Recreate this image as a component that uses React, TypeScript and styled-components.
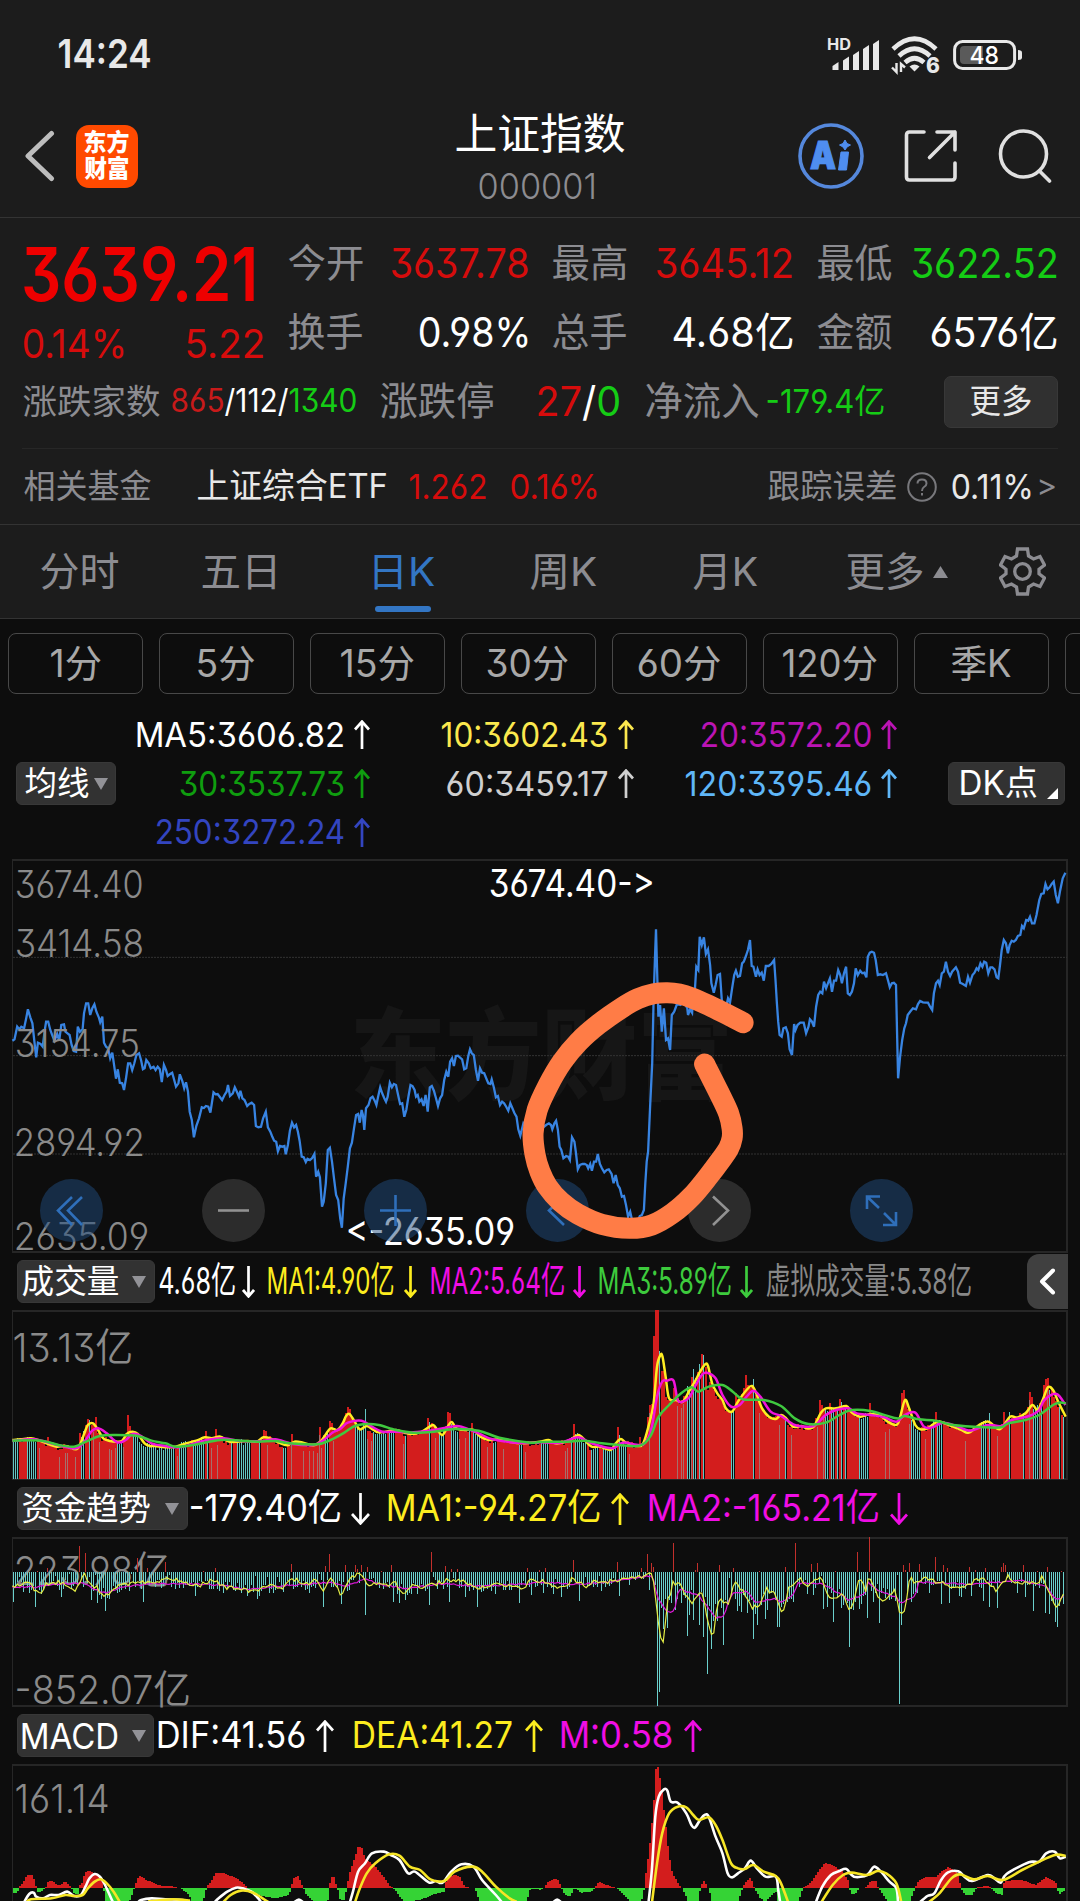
import React, { useLayoutEffect, useRef, useState } from "react";
import styled, { createGlobalStyle } from "styled-components";

const FONT = `Inter, Roboto, "Noto Sans CJK SC", sans-serif`;

const C = {
  bar: "#1c1c1c",
  page: "#0d0d0d",
  line: "#333333",
  frame: "#262626",
  gray: "#8c8c91",
  axis: "#8a8a8a",
  red: "#d60c0c",
  green: "#15cc15",
  white: "#ffffff",
  soft: "#e8e8e8",
  blue: "#3376c4",
  yellow: "#fcec1f",
  magenta: "#f00de4",
};

const Global = createGlobalStyle`
  html, body { margin: 0; padding: 0; background: ${C.page}; }
  *, *::before, *::after { box-sizing: border-box; }
  svg { display: block; flex: none; }
`;

/* ---------- text set to a given ink width ---------- */

const Slot = styled.span<{ $w: number; $ml: number; $size: number; $color: string; $weight: number }>`
  display: block;
  flex: none;
  width: ${(p) => p.$w}px;
  margin-left: ${(p) => p.$ml}px;
  height: 1.2em;
  line-height: 1.2em;
  font-family: ${FONT};
  font-size: ${(p) => p.$size}px;
  font-weight: ${(p) => p.$weight};
  color: ${(p) => p.$color};
  font-feature-settings: "cv03", "cv04", "cv09", "case", "calt" 0;
  white-space: pre;
`;

const Ink = styled.span`
  display: inline-block;
  transform-origin: 0 50%;
`;

type FitProps = {
  w: number;
  size: number;
  color?: string;
  weight?: number;
  ml?: number;
  className?: string;
  children: React.ReactNode;
};

function Fit({ w, size, color = C.gray, weight = 400, ml = 0, className, children }: FitProps) {
  const ref = useRef<HTMLSpanElement>(null);
  const [fit, setFit] = useState({ s: 1, x: 0 });
  useLayoutEffect(() => {
    const el = ref.current;
    const ctx = document.createElement("canvas").getContext("2d");
    if (!el || !ctx) return;
    ctx.font = `${weight} ${size}px ${FONT}`;
    const m = ctx.measureText(el.textContent || "");
    const lsb = -m.actualBoundingBoxLeft;
    const rsb = m.width - m.actualBoundingBoxRight;
    const s = w / (el.offsetWidth - lsb - rsb);
    setFit({ s, x: -lsb * s - 0.5 });
  }, [w, size, weight]);
  return (
    <Slot $w={w} $ml={ml} $size={size} $color={color} $weight={weight} className={className}>
      <Ink ref={ref} style={{ transform: `translateX(${fit.x}px) scaleX(${fit.s})` }}>
        {children}
      </Ink>
    </Slot>
  );
}

const Tint = styled.span<{ $c: string }>`
  color: ${(p) => p.$c};
`;

/* ---------- page parts ---------- */

const Screen = styled.div`
  width: 1080px;
  height: 1901px;
  overflow: hidden;
  background: ${C.page};
  font-family: ${FONT};
`;

const StatusBar = styled.div`
  display: flex;
  align-items: center;
  height: 109px;
  padding: 0 57px 0 59px;
  background: ${C.bar};
`;

const StatusIcons = styled.div`
  display: flex;
  align-items: center;
  gap: 12px;
  margin-left: auto;
`;

const NavBar = styled.header`
  display: flex;
  align-items: center;
  height: 109px;
  padding: 0 28px 14px 24px;
  background: ${C.bar};
  border-bottom: 1px solid ${C.line};
`;

const AppBadge = styled.div`
  display: grid;
  grid-auto-rows: 26px;
  place-content: center;
  align-items: center;
  width: 62px;
  height: 63px;
  margin-left: 21px;
  border-radius: 13px;
  background: #ff4a00;
`;

const TitleBlock = styled.div`
  display: flex;
  flex-direction: column;
  align-items: center;
  gap: 5px;
  width: 168px;
  margin-left: 318.500px;
  padding-top: 6px;
`;

const CodeLine = styled.div`
  margin: 2px 6px 0 0;
`;

const NavActions = styled.div`
  display: flex;
  align-items: center;
  margin-left: auto;
`;

const QuotePanel = styled.section`
  height: 306px;
  background: ${C.bar};
`;

const QuoteTop = styled.div`
  display: flex;
  height: 149px;
`;

const PriceBlock = styled.div`
  width: 289px;
  flex: none;
`;

const PriceRow = styled.div<{ $h: number }>`
  display: flex;
  align-items: center;
  height: ${(p) => p.$h}px;
  padding-left: 24px;
`;

const StatGrid = styled.div`
  display: grid;
  grid-template-columns: 239px 240px 239px;
  grid-auto-rows: 69px;
  column-gap: 25px;
  padding-top: 11px;
`;

const Stat = styled.div`
  display: flex;
  align-items: center;
  justify-content: space-between;
`;

const BreadthRow = styled.div`
  display: flex;
  align-items: center;
  height: 69px;
  padding-left: 24px;
`;

const MoreButton = styled.button`
  display: flex;
  align-items: center;
  justify-content: center;
  width: 114px;
  height: 52px;
  margin-left: 60px;
  padding: 0;
  border: 1px solid #383838;
  border-radius: 7px;
  background: #303030;
`;

const Divider = styled.div`
  height: 1px;
  margin: 12px 22px 0;
  background: #272727;
`;

const FundRow = styled.div`
  display: flex;
  align-items: center;
  height: 75px;
  padding: 0 24px;
`;

const Tabs = styled.nav`
  display: flex;
  height: 95px;
  padding-left: 41px;
  background: ${C.bar};
  border-top: 1px solid ${C.line};
  border-bottom: 1px solid ${C.line};
`;

const Tab = styled.div<{ $ml: number }>`
  display: flex;
  flex-direction: column;
  align-items: flex-start;
  padding-top: 23px;
  margin-left: ${(p) => p.$ml}px;
`;

const TabLine = styled.div`
  width: 56px;
  height: 6px;
  margin-top: 10px;
  border-radius: 3px;
  background: ${C.blue};
`;

const TabIcon = styled.div<{ $ml: number; $top: number }>`
  margin-left: ${(p) => p.$ml}px;
  padding-top: ${(p) => p.$top}px;
`;

const Periods = styled.div`
  display: grid;
  grid-template-columns: repeat(8, 135px);
  column-gap: 16px;
  height: 75px;
  padding: 14px 0 0 8px;
  overflow: hidden;
`;

const Period = styled.div`
  display: flex;
  align-items: center;
  justify-content: center;
  height: 61px;
  border: 1px solid #484848;
  border-radius: 8px;
`;

const Averages = styled.div`
  display: flex;
  align-items: center;
  height: 165px;
  padding: 14px 0 0 16px;
`;

const AverageGrid = styled.div`
  display: grid;
  grid-template-columns: 254px 264px 263px;
  grid-template-rows: repeat(3, 48.7px);
`;

const Average = styled.div`
  display: flex;
  align-items: center;
  justify-content: flex-end;
`;

const Chip = styled.button<{ $w: number; $pad: number }>`
  display: flex;
  align-items: center;
  flex: none;
  width: ${(p) => p.$w}px;
  height: 43px;
  padding: 0 0 0 ${(p) => p.$pad}px;
  border: 1px solid #383838;
  border-radius: 6px;
  background: #323232;
`;

const DkChip = styled(Chip)`
  margin-left: 51px;
`;

const Frame = styled.div<{ $h: number; $open?: boolean }>`
  position: relative;
  width: 1056px;
  height: ${(p) => p.$h}px;
  margin-left: 12px;
  border: 2px solid ${C.frame};
  border-left-width: 1px;
  border-bottom-width: ${(p) => (p.$open ? 0 : 2)}px;
`;

const Plot = styled.svg`
  position: absolute;
  left: -1px;
  top: -2px;
  overflow: visible;
`;

const Over = styled.div<{ $x: number; $y: number }>`
  position: absolute;
  left: ${(p) => p.$x - 13}px;
  top: ${(p) => p.$y - 1.5}px;
  transform: translateY(-50%);
`;

const Round = styled.button<{ $x: number; $on: boolean }>`
  position: absolute;
  left: ${(p) => p.$x - 31.5 - 13}px;
  top: 318px;
  width: 63px;
  height: 63px;
  padding: 0;
  border: 0;
  border-radius: 50%;
  background: ${(p) => (p.$on ? "rgba(32,75,125,.5)" : "rgba(75,75,75,.5)")};
  svg { position: absolute; inset: 0; }
`;

const Legend = styled.div`
  display: flex;
  align-items: center;
  height: 57px;
  padding: 0 12px 0 17px;
`;

const Drawer = styled.button`
  display: flex;
  align-items: center;
  justify-content: center;
  width: 41px;
  height: 55px;
  margin-left: auto;
  padding: 0;
  border: 0;
  border-radius: 12px 0 0 12px;
  background: #404040;
`;

/* ---------- small drawings ---------- */

const ArrowBox = styled.svg<{ $ml: number }>`
  margin-left: ${(p) => p.$ml}px;
`;

function Arrow({ dir, color, ml, w = 17, h = 32 }: { dir: "up" | "down"; color: string; ml: number; w?: number; h?: number }) {
  const c = w / 2;
  const d = dir === "up" ? `M${c} ${h}V2M1 ${c + 1.5}L${c} 1.6L${w - 1} ${c + 1.5}` : `M${c} 0V${h - 2}M1 ${h - c - 1.5}L${c} ${h - 1.6}L${w - 1} ${h - c - 1.5}`;
  return (
    <ArrowBox $ml={ml} width={w} height={h} viewBox={`0 0 ${w} ${h}`} fill="none" stroke={color} strokeWidth={2.7}>
      <path d={d} />
    </ArrowBox>
  );
}

function Caret({ ml }: { ml: number }) {
  return (
    <ArrowBox $ml={ml} width={14} height={12} viewBox="0 0 14 12">
      <path d="M0 0H14L7 12Z" fill="#929297" />
    </ArrowBox>
  );
}

const Signal = () => (
  <svg width="53" height="48" viewBox="-1 -6 53 48" fill="#e8e8e8">
    <path d="M5.500 29L11.500 25V33H5.500ZM16 23.500L22 19.500V33H16ZM26 18L32 14V33H26ZM36 12L42 8V33H36ZM46 7L52 3V33H46Z" />
    <text x="0" y="13" fontSize="15.500" fontWeight="700" textLength="24" lengthAdjust="spacingAndGlyphs" fontFamily={FONT}>HD</text>
  </svg>
);

const Wifi = () => (
  <svg width="50" height="50" viewBox="0 -6 50 50" fill="none" stroke="#e8e8e8">
    <path d="M2 13Q23.500 -7.500 45 13M8 20Q23.500 5.500 39 20M14 26.500Q23.500 18 33 26.500" strokeWidth="4.600" />
    <path d="M18.500 30.500Q23.500 26.500 28.500 30.500L23.500 35.500Z" fill="#e8e8e8" stroke="none" />
    <path d="M5.500 27V36L1 31.500M10 36V28L14 31.500" strokeWidth="2.400" />
    <text x="35" y="37" fill="#e8e8e8" stroke="none" fontSize="21" fontWeight="800" fontFamily={FONT} fontFeatureSettings='"cv03"'>6</text>
  </svg>
);

const Battery = () => (
  <svg width="70" height="32" viewBox="0 0 70 32">
    <rect x="1.600" y="2.500" width="60" height="27" rx="8" fill="none" stroke="#e8e8e8" strokeWidth="3" />
    <path d="M11 7H30V25H11Q7 25 7 21V11Q7 7 11 7Z" fill="#5a5a5a" />
    <path d="M65 11Q69 11 69 13.500V18.500Q69 21 65 21Z" fill="#e8e8e8" />
    <text x="16.500" y="25" fill="#fff" fontSize="24.500" fontWeight="500" textLength="29.500" lengthAdjust="spacingAndGlyphs" fontFamily={FONT}>48</text>
  </svg>
);

const Back = () => (
  <svg width="31" height="52" viewBox="0 0 31 52" fill="none" stroke="#bdbdbd" strokeWidth="5" strokeLinecap="round" strokeLinejoin="round">
    <path d="M27.500 3.500L4 26L27.500 48.500" />
  </svg>
);

const AiMark = () => (
  <svg width="66" height="66" viewBox="0 0 66 66">
    <circle cx="33" cy="33" r="31" fill="none" stroke="#5588dc" strokeWidth="3.600" />
    <text x="12" y="45.500" fill="#4f8ef0" stroke="#4f8ef0" strokeWidth="1.200" fontSize="38" fontWeight="900" textLength="26" lengthAdjust="spacingAndGlyphs" fontFamily={FONT}>A</text>
    <path d="M43 29H50.500L48.500 47H40.500ZM47 17L49 20.500L52.500 22L49 24L47 27L45 24L41.500 22L45 20.500Z" fill="#4f8ef0" stroke="#4f8ef0" strokeLinejoin="round" />
  </svg>
);

const Share = () => (
  <svg width="54" height="54" viewBox="0 0 54 54" fill="none" stroke="#e0e0e0" strokeWidth="3.600" strokeLinecap="round" strokeLinejoin="round">
    <path d="M20 3H5.500Q2.500 3 2.500 6V48Q2.500 51 5.500 51H48Q51 51 51 48V34M33 3H51V21M51 3L25.500 28.500" />
  </svg>
);

const Search = () => (
  <svg width="54" height="54" viewBox="0 0 54 54" fill="none" stroke="#e0e0e0" strokeWidth="3.600" strokeLinecap="round">
    <circle cx="25.500" cy="25" r="23" />
    <path d="M41.500 42L51.500 52" />
  </svg>
);

const Gear = () => (
  <svg width="47" height="49" viewBox="0 0 47 49" fill="none" stroke={C.gray} strokeWidth="3.300" strokeLinejoin="miter">
    <path d="M18.500 2H28.500L29.500 9L34.500 12L41 9.500L45.500 18L40 22.300V26.700L45.500 31L41 39.500L34.500 37L29.500 40L28.500 47H18.500L17.500 40L12.500 37L6 39.500L1.500 31L7 26.700V22.300L1.500 18L6 9.500L12.500 12L17.500 9Z" />
    <circle cx="23.500" cy="24.500" r="7.800" />
  </svg>
);

const Help = () => (
  <ArrowBox $ml={10} width={30} height={30} viewBox="0 0 30 30" fill="none" stroke="#78787c" strokeWidth={2}>
    <circle cx="15" cy="15" r="13.800" />
    <path d="M10.500 11.500Q10.500 7.500 15 7.500T19.500 11.500Q19.500 13.500 17 15Q15 16.300 15 19M15 21V23.500" />
  </ArrowBox>
);

/* ---------- series ---------- */

type P = [number, number];
const SX = 2.904;
const SY = 3;
const HALF = 1568;

const parse = (s: string, dx = 0): P[] =>
  s.trim().split(/\s+/).map((t) => {
    const [x, y] = t.split(",").map(Number);
    return [x + dx, y] as P;
  });

const series = (a: string, b: string): P[] => [...parse(a), ...parse(b, HALF)];
const sx = (x: number) => x / SX - 12;
const line = (p: P[], top: number) => p.map(([x, y]) => `${sx(x).toFixed(1)},${((y - top) / SY).toFixed(1)}`).join(" ");

const curve = (p: P[], top: number) => {
  const q = p.map(([x, y]) => [sx(x), (y - top) / SY]);
  let d = `M${q[0][0]} ${q[0][1]}`;
  for (let i = 0; i < q.length - 1; i++) {
    const a = q[i - 1] || q[i];
    const b = q[i];
    const c = q[i + 1];
    const e = q[i + 2] || c;
    d += `C${b[0] + (c[0] - a[0]) / 6} ${b[1] + (c[1] - a[1]) / 6} ${c[0] - (e[0] - b[0]) / 6} ${c[1] - (e[1] - b[1]) / 6} ${c[0]} ${c[1]}`;
  }
  return d;
};

const at = (p: P[], x: number) => {
  if (x <= p[0][0]) return p[0][1];
  for (let i = 1; i < p.length; i++) {
    if (x <= p[i][0]) {
      const [x0, y0] = p[i - 1];
      const [x1, y1] = p[i];
      return y0 + ((y1 - y0) * (x - x0)) / (x1 - x0 || 1);
    }
  }
  return p[p.length - 1][1];
};

const seeded = (seed: number) => () => {
  seed = (seed * 1664525 + 1013904223) % 4294967296;
  return seed / 4294967296;
};

const PRICE = series(
  `36,572 42,568 50,530 56,538 62,530 70,535 76,505 81,478 88,502 94,520 100,575 105,622 110,578 118,582 124,590 130,540 134,515 140,515 146,540 152,556 158,572 166,552 172,572 178,525 186,523 190,545 196,550 202,555 208,585 214,603 221,605 226,530 232,545 240,538 244,490 250,460 256,460 262,495 268,475 274,463 280,485 287,502 291,517 297,500 302,578 308,590 314,595 320,625 326,608 332,650 337,686 342,658 348,698 355,700 360,720 366,685 372,640 378,640 384,660 390,640 396,615 404,610 410,632 415,658 420,655 425,630 432,640 438,655 446,650 452,660 458,650 464,658 470,696 476,645 482,660 487,678 494,672 500,668 506,690 511,710 518,700 522,673 530,695 535,715 540,697 546,725 551,785 557,810 563,862 570,828 578,805 586,772 592,774 598,768 605,770 611,788 620,727 626,733 632,732 638,740 645,750 652,735 658,725 662,705 668,738 676,730 682,712 688,725 694,740 698,722 704,745 710,750 718,768 724,762 731,758 738,765 743,828 750,832 758,830 764,805 772,785 778,832 785,845 790,858 796,872 802,875 807,904 813,888 820,890 826,888 830,913 836,885 842,842 848,818 854,832 860,825 865,845 870,872 876,920 882,922 888,936 893,926 900,930 906,925 913,912 918,980 924,965 929,982 935,1070 940,1055 946,1000 952,900 958,893 964,935 970,985 976,1035 982,1050 988,1105 993,1133 998,1045 1004,1000 1010,950 1016,895 1022,878 1028,835 1034,795 1040,792 1045,818 1050,780 1054,795 1058,840 1063,775 1070,765 1076,745 1082,740 1088,752 1093,765 1098,740 1104,712 1110,730 1116,745 1121,755 1126,740 1132,698 1138,712 1144,702 1150,705 1156,735 1162,762 1168,760 1174,800 1180,780 1186,740 1192,705 1198,708 1204,720 1208,740 1213,735 1218,755 1224,748 1230,768 1236,735 1242,785 1248,712 1254,708 1260,722 1266,745 1272,768 1278,745 1284,735 1290,690 1296,665 1302,680 1307,635 1313,625 1318,648 1324,618 1330,617 1336,623 1342,628 1348,658 1354,655 1360,618 1365,598 1370,610 1376,615 1382,660 1388,692 1394,655 1400,668 1406,670 1412,685 1418,700 1424,702 1428,688 1434,712 1440,742 1446,738 1452,765 1458,755 1464,760 1470,770 1476,782 1482,760 1488,775 1494,790 1500,800 1505,838 1511,857 1520,820 1540,850 1560,840`,
  `10,832 18,825 26,820 32,825 36,838 42,820 47,812 52,840 57,890 62,900 68,925 76,918 82,920 87,930 93,862 100,875 104,905 110,958 116,945 124,942 130,942 136,945 140,955 146,942 151,962 157,935 163,935 168,912 174,942 180,955 187,967 194,960 200,958 208,972 214,1000 220,975 226,1005 232,1015 238,1040 244,1038 250,1065 256,1100 262,1085 268,1112 285,1110 290,1098 296,1095 302,1080 306,1000 310,935 314,905 320,770 326,640 330,450 334,320 337,238 340,350 344,500 349,465 354,545 360,475 366,570 372,565 378,600 383,495 390,485 398,462 408,465 418,455 428,475 430,495 436,478 442,488 446,430 450,420 454,350 460,360 464,260 470,285 476,262 482,312 488,298 494,345 498,400 505,428 510,405 516,375 523,372 528,450 535,470 542,465 546,445 552,458 558,415 564,375 569,362 575,380 581,378 587,340 592,335 598,318 604,300 610,270 615,348 620,350 627,380 632,358 638,375 644,368 650,392 656,348 664,348 672,342 680,330 684,390 688,460 692,515 696,555 702,560 707,535 714,532 720,550 725,598 732,615 738,522 742,540 748,525 756,518 766,518 773,550 780,530 784,508 790,515 796,530 802,470 808,435 814,425 820,430 825,395 831,415 837,398 842,385 848,425 854,392 860,392 866,360 872,375 877,400 883,370 889,350 894,430 900,435 906,425 912,400 917,355 923,375 930,362 936,370 942,368 948,382 952,320 958,308 964,305 970,308 975,330 981,375 988,373 996,375 1005,370 1012,395 1016,412 1022,400 1028,398 1034,405 1037,540 1040,685 1046,620 1052,570 1058,535 1063,520 1068,495 1075,485 1083,475 1092,478 1098,462 1104,453 1112,457 1120,458 1127,458 1133,470 1139,480 1144,430 1150,400 1156,392 1161,405 1167,370 1173,365 1179,335 1185,365 1191,378 1197,365 1203,358 1208,352 1214,365 1220,398 1228,402 1237,408 1243,380 1249,398 1256,375 1262,368 1268,355 1273,360 1279,340 1285,350 1290,335 1296,338 1302,370 1308,352 1314,352 1320,358 1326,382 1331,385 1336,345 1341,300 1347,270 1353,280 1359,310 1364,285 1370,272 1376,275 1382,270 1388,258 1395,255 1400,228 1405,235 1412,210 1418,212 1423,200 1429,220 1436,220 1442,195 1450,150 1456,132 1463,130 1468,102 1474,118 1480,112 1486,102 1492,95 1498,135 1504,160 1510,125 1518,85 1526,68`
);

const SCRIBBLE = parse(
  `590,518 545,494 490,466 440,443 405,432 370,428 330,431 285,446 240,472 170,523 112,576 64,636 24,706 -8,780 -20,850 -14,915 0,965 22,1010 60,1055 110,1092 180,1123 260,1135 325,1125 385,1090 440,1040 490,978 525,930 548,895 558,865 558,835 548,790 520,728 478,642`,
  HALF
);

const V_FAST = series(
  `36,570 60,568 90,565 115,572 140,582 165,590 190,588 220,598 232,585 245,550 255,525 270,520 285,540 300,565 320,573 340,575 355,572 370,550 385,545 400,552 420,580 435,588 450,588 480,592 510,590 540,580 570,572 595,562 615,565 640,560 665,575 690,575 720,573 745,575 765,562 785,565 810,578 835,586 855,575 880,578 910,586 930,575 945,555 960,535 980,540 995,520 1005,498 1015,492 1030,515 1045,538 1065,528 1085,540 1100,547 1120,545 1150,540 1175,548 1195,552 1220,548 1240,535 1258,525 1270,540 1285,555 1300,530 1312,516 1325,535 1350,540 1375,540 1395,560 1420,570 1450,568 1480,575 1510,580 1540,578`,
  `0,575 25,570 45,580 70,577 90,568 112,555 130,570 150,590 175,590 205,600 220,580 235,567 250,578 285,588 300,580 315,530 330,460 340,350 350,315 356,320 365,380 375,445 395,450 415,455 435,420 450,395 465,365 480,343 488,348 500,400 515,430 530,450 540,475 558,485 575,455 600,420 616,408 630,435 645,475 665,500 685,507 700,495 715,505 735,530 760,528 775,535 795,530 815,490 830,475 860,475 890,468 905,487 930,500 960,492 990,498 1010,515 1035,525 1045,505 1060,450 1072,475 1090,525 1105,538 1125,535 1155,515 1175,520 1200,530 1225,540 1245,548 1275,525 1303,515 1335,538 1365,500 1385,503 1410,490 1430,465 1445,480 1460,450 1475,412 1490,420 1505,455 1527,500`
);
const V_MID = series(
  `36,573 100,568 170,586 220,595 245,575 265,545 285,535 310,550 340,577 365,570 385,552 410,558 440,580 480,588 520,592 560,582 600,570 650,565 700,573 760,573 800,568 850,582 910,585 940,570 965,548 990,535 1010,518 1050,512 1080,530 1110,545 1150,545 1200,547 1260,540 1310,530 1340,530 1390,550 1430,568 1500,578 1560,578`,
  `0,577 60,578 110,562 150,580 210,595 240,578 290,585 310,572 325,530 340,440 355,395 370,392 388,392 400,450 415,455 435,440 450,410 470,375 485,368 510,385 530,435 555,470 580,465 600,440 620,422 640,440 670,485 700,498 740,525 780,530 800,525 830,495 860,480 895,475 920,490 960,495 1000,502 1035,515 1060,495 1090,488 1115,530 1140,532 1170,518 1210,528 1250,542 1300,525 1340,528 1370,510 1420,498 1450,480 1465,450 1500,432 1526,465`
);
const V_SLOW = series(
  `36,572 120,572 170,585 215,590 250,575 290,558 335,555 400,558 440,572 480,580 510,590 560,585 640,570 700,572 750,575 800,573 840,580 920,583 960,570 1000,548 1030,528 1065,522 1100,525 1150,540 1200,548 1260,545 1320,537 1390,542 1450,563 1540,578`,
  `0,576 80,575 130,572 180,580 230,585 290,587 320,560 345,500 375,465 410,430 440,412 460,425 490,410 530,405 560,425 590,448 650,450 700,468 740,505 780,522 830,518 870,495 905,480 960,483 1035,505 1060,498 1100,508 1150,512 1200,525 1290,532 1340,532 1360,520 1410,510 1450,495 1490,465 1510,458 1527,460`
);
const V_PEAKS = series(
  `135,562 228,548 247,525 252,507 275,502 368,495 373,528 593,543 623,538 765,540 771,543 843,552 925,532 955,513 961,520 1000,488 1005,472 1011,478 1238,505 1296,487 1301,489 1366,518`,
  `95,523 222,530 290,562 310,500 316,465 321,463 330,258 336,180 341,180 352,362 366,440 385,415 391,420 436,380 454,366 465,313 488,420 565,428 588,415 598,376 604,405 808,450 814,466 842,458 866,448 953,458 1047,430 1052,420 1150,486 1345,486 1418,427 1424,440 1459,405 1465,388 1471,384`
);
const V_PEAKS_DOWN = series(`257,510 1059,478 1244,515`, `101,553 228,555 345,303 426,408 443,357 460,342 472,316 616,388 872,455 1303,490 1360,487 1477,420`);

const F_UP = series(
  `110,962 135,955 228,887 245,908 396,925 425,955 478,935 590,962 623,955 843,942 942,948 953,912 1000,945 1030,945 1038,958 1050,945 1063,950 1104,962 1133,945 1250,907 1290,948 1308,958 1325,958 1528,953`,
  `0,960 14,955 95,930 222,937 292,955 310,912 320,940 326,950 384,880 448,960 454,940 518,945 560,955 634,962 710,952 740,880 785,942 802,938 855,962 920,905 953,862 1052,945 1058,960 1070,938 1100,942 1145,922 1168,945 1180,953 1245,950 1262,960 1290,953 1338,950 1343,938 1348,945 1402,945 1442,962 1470,950 1512,962`
);
const F_DOWN = series(
  `36,95 100,112 120,72 175,82 262,90 280,100 292,88 304,124 345,65 413,95 478,70 564,78 650,68 745,88 820,66 900,70 936,110 988,103 1059,134 1140,95 1157,98 1175,90 1244,105 1303,97 1348,80 1384,110 1440,72 1505,98 1540,75`,
  `6,68 36,72 60,80 111,93 140,48 175,62 227,77 257,45 315,60 339,408 345,365 355,178 378,100 392,120 408,98 426,198 432,135 442,150 460,165 472,202 484,312 496,238 530,225 570,122 576,108 582,125 600,128 617,207 628,165 652,148 658,120 687,170 692,170 698,112 715,95 773,72 791,76 820,117 832,110 849,157 872,115 895,230 913,95 925,118 949,145 970,95 982,160 1000,85 1012,90 1041,402 1047,165 1082,72 1128,70 1162,102 1187,98 1215,78 1220,82 1250,78 1284,92 1302,110 1326,115 1384,68 1407,82 1430,122 1465,130 1477,132 1495,155 1500,172 1512,85 1527,92`
);
const F_FAST = series(
  `36,50 80,35 95,50 110,72 120,68 135,40 180,35 215,60 230,42 245,10 262,45 280,48 300,80 320,65 340,50 380,40 420,38 460,35 500,22 520,35 540,40 580,45 600,36 625,28 650,50 700,55 720,62 750,60 780,45 800,50 820,55 845,28 860,27 880,45 915,30 940,62 960,20 975,50 990,72 1020,20 1045,8 1055,30 1070,40 1110,45 1150,40 1175,78 1185,55 1200,42 1220,50 1250,45 1300,30 1350,32 1390,60 1410,45 1440,42 1500,50 1515,60 1540,30`,
  `0,30 60,52 80,45 95,20 110,36 130,48 155,35 180,35 240,30 300,18 325,3 333,60 340,130 348,190 355,215 360,205 365,150 372,85 380,75 384,35 390,40 405,40 412,55 425,75 435,85 445,110 450,75 465,70 474,75 480,120 488,150 495,190 505,185 512,120 520,90 550,97 556,70 565,40 575,42 582,60 590,55 598,80 615,110 640,110 645,80 660,55 668,65 680,60 688,85 700,125 710,110 720,60 735,38 750,25 762,30 780,45 808,20 825,42 840,80 850,88 870,70 885,75 895,120 910,98 925,35 937,35 945,70 950,30 955,20 970,50 990,95 1005,85 1030,60 1038,90 1045,135 1060,115 1068,65 1075,10 1085,35 1095,40 1110,22 1130,30 1170,38 1190,48 1230,55 1250,40 1275,25 1290,22 1325,60 1340,40 1360,18 1380,42 1400,35 1440,40 1460,20 1470,50 1480,70 1500,115 1515,85 1527,50`
);
const F_SLOW = series(
  `36,50 100,50 150,42 240,38 280,60 310,68 360,48 450,40 550,40 650,45 720,58 800,48 900,40 960,35 1000,50 1060,25 1100,42 1180,55 1280,40 1400,48 1560,38`,
  `0,35 100,42 200,35 325,15 333,40 340,80 355,105 370,125 390,125 402,55 430,65 460,75 490,115 510,142 535,138 548,90 560,70 600,62 625,95 680,85 705,95 735,75 750,38 820,40 870,70 900,90 920,80 945,70 950,35 990,65 1035,80 1045,98 1090,78 1100,35 1250,42 1400,30 1470,50 1500,88 1527,75`
);

const M_HIST = series(
  `36,970 50,970 56,950 65,940 80,915 95,915 105,950 108,965 118,967 130,956 135,950 140,933 152,933 165,945 178,943 190,933 206,950 210,958 215,970 228,972 232,945 238,938 248,905 260,903 280,910 300,940 303,975 306,995 375,995 385,970 392,950 398,925 408,918 425,930 445,938 470,948 510,950 525,956 535,962 550,975 555,995 590,995 600,952 615,930 627,910 650,910 690,925 716,950 722,958 740,970 770,980 800,985 840,975 846,950 852,925 865,918 880,950 884,958 890,975 910,995 952,995 956,950 962,920 970,920 978,950 982,960 988,990 1000,990 1007,956 1010,935 1015,910 1030,865 1040,830 1050,830 1060,865 1090,890 1110,915 1135,950 1145,956 1160,980 1175,995 1220,990 1255,975 1290,965 1292,950 1298,925 1320,915 1335,920 1350,950 1380,956 1392,995 1530,995 1540,956 1566,958`,
  `0,960 10,956 14,950 25,933 50,925 62,950 65,960 72,975 90,978 98,956 105,956 120,968 150,965 158,956 162,950 170,935 190,944 215,952 225,956 240,970 265,995 295,995 303,956 305,930 312,880 322,800 332,680 338,582 343,590 346,612 352,640 358,700 365,760 374,850 385,910 405,945 412,954 425,980 430,995 460,995 466,954 475,930 486,950 492,958 498,995 575,995 590,950 600,935 612,922 621,950 625,958 640,985 655,995 685,965 692,995 750,995 765,952 785,940 805,910 828,878 845,883 880,905 895,930 899,956 905,972 918,970 925,956 948,952 962,932 975,932 983,954 1000,980 1010,995 1075,995 1090,952 1100,930 1125,920 1150,922 1165,905 1185,892 1210,905 1223,950 1226,962 1235,975 1255,974 1270,952 1300,948 1310,954 1325,970 1342,974 1346,940 1355,932 1400,930 1440,945 1470,922 1498,935 1502,960 1510,972 1526,960`
);
const M_DIF = [
  parse(`68,1000 85,972 98,968 105,980 125,985 145,975 170,975 195,965 215,978 235,975 248,950 260,925 275,912 290,920 305,945 325,990 330,1000`),
  parse(`400,998 410,990 440,985 480,988 530,990 552,996`),
  parse(`620,1000 635,985 660,965 685,953 705,955 730,965 750,985 760,1000`),
  parse(`850,1000 868,989 884,1000`),
  parse(`1015,1000 1025,965 1040,905 1060,880 1080,850 1115,845 1135,855 1160,870 1185,910 1205,905 1245,937 1265,933 1285,938 1310,905 1340,883 1375,890 1400,930 1440,975 1460,1000`),
  parse(`35,1000 50,989 65,1000`, HALF),
  parse(`315,1000 325,900 335,740 345,680 360,658 370,662 380,695 400,698 425,730 440,765 450,773 465,750 478,735 490,740 510,800 530,850 545,910 558,922 575,910 595,895 612,872 630,895 655,920 685,920 692,960 698,1000`, HALF),
  parse(`800,1000 820,950 845,915 870,903 890,897 912,920 950,915 970,890 990,905 1015,935 1035,955 1040,1000`, HALF),
  parse(`1100,1000 1125,978 1145,970 1165,930 1185,907 1215,904 1235,922 1255,933 1300,915 1320,925 1338,938 1355,912 1420,877 1450,875 1470,850 1495,845 1510,865 1527,860`, HALF),
];
const M_DEA = [
  parse(`75,1000 90,988 150,985 190,975 215,978 240,975 255,955 275,935 292,928 310,940 330,965 350,1000`),
  parse(`430,995 500,988 552,992`),
  parse(`645,1000 670,975 700,962 735,968 770,990 785,1000`),
  parse(`1030,1000 1045,955 1065,910 1090,880 1130,853 1160,857 1190,890 1220,900 1250,928 1290,933 1320,905 1370,890 1400,905 1440,950 1480,985 1500,995`),
  parse(`325,1000 340,880 355,790 375,730 400,710 425,712 445,735 462,750 490,742 510,765 530,810 555,880 575,895 595,897 620,885 650,905 685,918 700,940 722,1000`, HALF),
  parse(`815,1000 850,945 880,915 905,908 950,915 980,903 1005,910 1035,940 1050,1000`, HALF),
  parse(`1125,1000 1160,970 1195,925 1220,913 1260,928 1300,918 1345,930 1400,900 1440,880 1495,855 1527,858`, HALF),
];

const COUNT = 526;
const slotOf = (x: number) => Math.round((sx(x) - 1) / 2);

const roughen = (p: P[], amount: number, seed: number): P[] => {
  const rnd = seeded(seed);
  const out: P[] = [];
  for (let x = p[0][0]; x < p[p.length - 1][0]; x += 7) out.push([x, at(p, x) + (rnd() - 0.5) * amount]);
  return out;
};

/* ---------- charts ---------- */

function PricePlot() {
  return (
    <Plot width="1056" height="394" fill="none">
      {[322, 617, 912].map((y) => (
        <path key={y} d={`M1 ${(y - 27) / SY}H1055`} stroke="#333" strokeDasharray="2 1" />
      ))}
      <polyline points={line(PRICE, 27)} stroke="#3884e2" strokeWidth="2.300" strokeLinejoin="miter" />
    </Plot>
  );
}

function VolumePlot() {
  const rnd = seeded(17);
  const up = new Map(V_PEAKS.map(([x, y]) => [slotOf(x), y]));
  const down = new Map(V_PEAKS_DOWN.map(([x, y]) => [slotOf(x), y]));
  let red = "";
  let cyan = "";
  let seam = "";
  let isUp = true;
  for (let i = 0; i < COUNT; i++) {
    const x = 1 + i * 2;
    const zx = (x + 12) * SX;
    if (rnd() < 0.4) isUp = rnd() < 0.68;
    const surge = zx > 1873 && zx < 1915;
    let y = at(V_FAST, Math.min(zx + 6, 3094)) + (rnd() - 0.42) * 18;
    const pu = up.get(i);
    const pd = down.get(i);
    const rising = pu !== undefined || (pd === undefined && (isUp || surge));
    if (pu !== undefined) y = pu;
    if (pd !== undefined) y = pd;
    const t = Math.round((y - 180) / SY);
    if (rising) {
      red += `M${x} ${t}h2V169h-2z`;
      if (rnd() < 0.13) seam += `M${x} ${t + 8}h1V169h-1z`;
    } else cyan += `M${x} ${t}h1V169h-1z`;
  }
  return (
    <Plot width="1056" height="170" fill="none">
      <path d={cyan} fill="#63c6c4" />
      <path d={red} fill="#d31d1d" />
      <path d={seam} fill="#a56f6c" />
      <g strokeWidth="2.500" strokeLinejoin="round">
        <path d={curve(V_FAST, 180)} stroke="#ffee22" />
        <path d={curve(V_MID, 180)} stroke="#f312dc" />
        <path d={curve(V_SLOW, 180)} stroke="#3fc93f" />
      </g>
    </Plot>
  );
}

function FundPlot() {
  const rnd = seeded(91);
  const down = new Map(F_DOWN.map(([x, y]) => [slotOf(x), y]));
  const up = new Map(F_UP.map(([x, y]) => [slotOf(x), y]));
  let cyan = "";
  let red = "";
  for (let i = 0; i < COUNT; i++) {
    const x = 1 + i * 2;
    const zx = (x + 12) * SX;
    const pu = up.get(i);
    if (pu !== undefined) {
      const h = Math.round((966 - pu) / SY);
      red += `M${x} ${35 - h}h1V35h-1z`;
      continue;
    }
    const pd = down.get(i);
    const base = at(F_SLOW, zx);
    const len = pd !== undefined ? pd : rnd() < 0.06 ? 12 + rnd() * 12 : base * (0.7 + rnd() * 0.75);
    cyan += `M${x} 35h1v${Math.max(2, Math.round((len - 6) / SY))}h-1z`;
  }
  return (
    <Plot width="1056" height="170" fill="none">
      <path d={cyan} fill="#6ad0cc" />
      <path d={red} fill="#c22f2b" />
      <polyline points={line(roughen(F_SLOW, 5, 7), -100)} stroke="#dd18d8" strokeWidth="1.200" />
      <polyline points={line(roughen(F_FAST, 13, 5), -100)} stroke="#e4ee45" strokeWidth="1.200" />
    </Plot>
  );
}

function MacdPlot() {
  let red = "";
  let green = "";
  for (let i = 0; i < COUNT; i++) {
    const x = 1 + i * 2;
    const y = at(M_HIST, (x + 13) * SX);
    const t = Math.round((y - 582) / SY);
    if (t < 124) red += `M${x} ${t}h2V124h-2z`;
    else if (t > 124) green += `M${x} 124h2V${t}h-2z`;
  }
  return (
    <Plot width="1056" height="137" fill="none">
      <path d={red} fill="#d31d1d" />
      <path d={green} fill="#35d335" />
      <g strokeWidth="2.600">
        {M_DIF.map((p, i) => <path key={i} d={curve(p, 582)} stroke="#fff" />)}
        {M_DEA.map((p, i) => <path key={i} d={curve(p, 582)} stroke="#f6e526" />)}
      </g>
    </Plot>
  );
}

/* ---------- data tables ---------- */

const STATS: [string, string, number, string][] = [
  ["今开", "3637.78", 136, C.red],
  ["最高", "3645.12", 136, C.red],
  ["最低", "3622.52", 144, C.green],
  ["换手", "0.98%", 108, C.white],
  ["总手", "4.68亿", 119, C.white],
  ["金额", "6576亿", 125, C.white],
];

const TABS: [string, number, number][] = [
  ["分时", 78, 0],
  ["五日", 73, 83.5],
  ["日K", 60, 99],
  ["周K", 66, 96],
  ["月K", 64, 97],
  ["更多", 76, 89],
];

const PERIODS: [string, number][] = [
  ["1分", 50], ["5分", 57], ["15分", 74], ["30分", 81], ["60分", 82], ["120分", 95], ["季K", 60],
];

const AVERAGES: [string, number, string][] = [
  ["MA5:3606.82", 206, "#ffffff"],
  ["10:3602.43", 166, "#fbe84e"],
  ["20:3572.20", 169, "#bb14b4"],
  ["30:3537.73", 163.500, "#0f9d0f"],
  ["60:3459.17", 160, "#cfcfcf"],
  ["120:3395.46", 185.500, "#5fb6f7"],
  ["250:3272.24", 187, "#3345c0"],
];

const LEVELS: [string, number, number][] = [
  ["3674.40", 125.500, 25.700],
  ["3414.58", 125.500, 84.700],
  ["3154.75", 122, 184],
  ["2894.92", 126, 283],
  ["2635.09", 131, 377],
];

const TOOLS: [number, boolean, string][] = [
  [71.300, true, "M32 18L18 31.500L32 46M42 18L28 31.500L42 46"],
  [233.500, false, "M16 31.500H47"],
  [395.300, true, "M16 31.500H47M31.500 16V47"],
  [557, true, "M38 17.500L23 31.500L38 46"],
  [719.400, false, "M25 17.500L40 31.500L25 46"],
  [881.300, true, "M17 30V17.500H30M17 17.500L29 29M34 34L46 46M46 33V46H33"],
];

export default function App() {
  return (
    <Screen>
      <Global />
      <StatusBar>
        <Fit w={92} size={39.500} weight={600} color={C.soft}>14:24</Fit>
        <StatusIcons>
          <Signal />
          <Wifi />
          <Battery />
        </StatusIcons>
      </StatusBar>

      <NavBar>
        <Back />
        <AppBadge>
          <Fit w={44} size={24} weight={900} color="#fff">东方</Fit>
          <Fit w={44} size={24} weight={900} color="#fff">财富</Fit>
        </AppBadge>
        <TitleBlock>
          <Fit w={168} size={42} color="#fff">上证指数</Fit>
          <CodeLine>
            <Fit w={115} size={35.500} weight={350}>000001</Fit>
          </CodeLine>
        </TitleBlock>
        <NavActions>
          <AiMark />
          <TabIcon $ml={40} $top={0}><Share /></TabIcon>
          <TabIcon $ml={40} $top={0}><Search /></TabIcon>
        </NavActions>
      </NavBar>

      <QuotePanel>
        <QuoteTop>
          <PriceBlock>
            <PriceRow $h={112}>
              <Fit w={230} size={74} weight={600} color="#ee0000">3639.21</Fit>
            </PriceRow>
            <PriceRow $h={28}>
              <Fit w={100} size={40} color={C.red}>0.14%</Fit>
              <Fit w={76} size={40} color={C.red} ml={64}>5.22</Fit>
            </PriceRow>
          </PriceBlock>
          <StatGrid>
            {STATS.map(([label, value, w, color]) => (
              <Stat key={label}>
                <Fit w={74} size={39}>{label}</Fit>
                <Fit w={w} size={41} color={color}>{value}</Fit>
              </Stat>
            ))}
          </StatGrid>
        </QuoteTop>
        <BreadthRow>
          <Fit w={136.500} size={34.500}>涨跌家数</Fit>
          <Fit w={184.500} size={32} color="#fff" ml={11}>
            <Tint $c="#c81a1a">865</Tint>/112/<Tint $c={C.green}>1340</Tint>
          </Fit>
          <Fit w={113} size={39} ml={25}>涨跌停</Fit>
          <Fit w={81} size={41} color="#fff" ml={45}>
            <Tint $c={C.red}>27</Tint>/<Tint $c={C.green}>0</Tint>
          </Fit>
          <Fit w={113} size={39} ml={26}>净流入</Fit>
          <Fit w={116} size={33} color={C.green} ml={9}>-179.4亿</Fit>
          <MoreButton>
            <Fit w={61} size={33} color={C.soft}>更多</Fit>
          </MoreButton>
        </BreadthRow>
        <Divider />
        <FundRow>
          <Fit w={128} size={33}>相关基金</Fit>
          <Fit w={188} size={34} color={C.soft} ml={46}>上证综合ETF</Fit>
          <Fit w={76} size={34.500} color={C.red} ml={24}>1.262</Fit>
          <Fit w={85} size={34.500} color={C.red} ml={26}>0.16%</Fit>
          <Fit w={128} size={33} ml={172}>跟踪误差</Fit>
          <Help />
          <Fit w={78} size={34.500} color={C.soft} ml={16}>0.11%</Fit>
          <Fit w={16} size={30} ml={9}>&gt;</Fit>
        </FundRow>
      </QuotePanel>

      <Tabs>
        {TABS.map(([label, w, ml]) => (
          <Tab key={label} $ml={ml}>
            <Fit w={w} size={40} color={label === "日K" ? C.blue : C.gray}>{label}</Fit>
            {label === "日K" && <TabLine />}
          </Tab>
        ))}
        <TabIcon $ml={10} $top={41}>
          <svg width="15" height="12" viewBox="0 0 15 12"><path d="M7.500 0L15 12H0Z" fill={C.gray} /></svg>
        </TabIcon>
        <TabIcon $ml={51} $top={22}><Gear /></TabIcon>
      </Tabs>

      <Periods>
        {PERIODS.map(([label, w]) => (
          <Period key={label}>
            <Fit w={w} size={38} color="#a8a8a8">{label}</Fit>
          </Period>
        ))}
        <Period />
      </Periods>

      <Averages>
        <Chip $w={100} $pad={9}>
          <Fit w={63} size={33} color="#fff">均线</Fit>
          <Caret ml={5} />
        </Chip>
        <AverageGrid>
          {AVERAGES.map(([text, w, color]) => (
            <Average key={text}>
              <Fit w={w} size={34.500} color={color}>{text}</Fit>
              <Arrow dir="up" color={color} ml={10} w={16} h={29} />
            </Average>
          ))}
        </AverageGrid>
        <DkChip $w={117} $pad={12}>
          <Fit w={76} size={34} color="#fff">DK点</Fit>
          <ArrowBox $ml={10} width={11} height={31} viewBox="0 0 11 31">
            <path d="M11 20V31H0Z" fill="#fff" />
          </ArrowBox>
        </DkChip>
      </Averages>

      <Frame $h={394}>
        <Over $x={355} $y={196}>
          <Fit w={373} size={100} weight={900} color="#161616">东方财富</Fit>
        </Over>
        <PricePlot />
        {LEVELS.map(([text, w, y]) => (
          <Over key={text} $x={16.500} $y={y}>
            <Fit w={w} size={38} weight={350} color={C.axis}>{text}</Fit>
          </Over>
        ))}
        <Over $x={490.700} $y={24}>
          <Fit w={161.500} size={38} color="#fff">3674.40-&gt;</Fit>
        </Over>
        <Over $x={348.500} $y={372}>
          <Fit w={165} size={38} color="#fff">&lt;-2635.09</Fit>
        </Over>
        {TOOLS.map(([x, on, d]) => (
          <Round key={x} $x={x} $on={on}>
            <svg width="63" height="63" viewBox="0 0 63 63" fill="none" stroke={on ? "#2f6fba" : "#929292"} strokeWidth="2.600">
              <path d={d} />
            </svg>
          </Round>
        ))}
        <Plot width="1056" height="394" fill="none">
          <path d={curve(SCRIBBLE, 27)} stroke="#ff7c46" strokeWidth="21" strokeLinecap="round" strokeLinejoin="round" />
        </Plot>
      </Frame>

      <Legend>
        <Chip $w={138} $pad={5}>
          <Fit w={96} size={33.500} color="#fff">成交量</Fit>
          <Caret ml={13} />
        </Chip>
        <Fit w={75.500} size={37} color="#fff" ml={4.500}>4.68亿</Fit>
        <Arrow dir="down" color="#fff" ml={7} w={13} />
        <Fit w={125} size={37} color={C.yellow} ml={14}>MA1:4.90亿</Fit>
        <Arrow dir="down" color={C.yellow} ml={10} w={13} />
        <Fit w={132.500} size={37} color={C.magenta} ml={14.500}>MA2:5.64亿</Fit>
        <Arrow dir="down" color={C.magenta} ml={8.500} w={13} />
        <Fit w={131} size={37} color="#3dcb3d" ml={14.500}>MA3:5.89亿</Fit>
        <Arrow dir="down" color="#3dcb3d" ml={9} w={13} />
        <Fit w={204} size={36} color="#888" ml={14}>虚拟成交量:5.38亿</Fit>
        <Drawer>
          <svg width="17" height="27" viewBox="0 0 17 27" fill="none" stroke="#fff" strokeWidth="4" strokeLinecap="round" strokeLinejoin="round">
            <path d="M14 2.500L3 13.500L14 24.500" />
          </svg>
        </Drawer>
      </Legend>

      <Frame $h={170}>
        <VolumePlot />
        <Over $x={15} $y={38}>
          <Fit w={116} size={39.500} weight={350} color={C.axis}>13.13亿</Fit>
        </Over>
      </Frame>

      <Legend>
        <Chip $w={171} $pad={5}>
          <Fit w={128} size={33.500} color="#fff">资金趋势</Fit>
          <Caret ml={14} />
        </Chip>
        <Fit w={150} size={37} color="#fff" ml={3}>-179.40亿</Fit>
        <Arrow dir="down" color="#fff" ml={9.500} w={19} />
        <Fit w={211.500} size={37} color={C.yellow} ml={19.500}>MA1:-94.27亿</Fit>
        <Arrow dir="up" color={C.yellow} ml={10} w={18} />
        <Fit w={229} size={37} color={C.magenta} ml={21}>MA2:-165.21亿</Fit>
        <Arrow dir="down" color={C.magenta} ml={11.500} w={18} />
      </Legend>

      <Frame $h={170}>
        <Over $x={16.500} $y={34}>
          <Fit w={151} size={39.500} weight={350} color={C.axis}>223.98亿</Fit>
        </Over>
        <FundPlot />
        <Over $x={16.500} $y={153}>
          <Fit w={172} size={39.500} weight={350} color={C.axis}>-852.07亿</Fit>
        </Over>
      </Frame>

      <Legend>
        <Chip $w={137} $pad={5}>
          <Fit w={95} size={35} color="#fff">MACD</Fit>
          <Caret ml={14} />
        </Chip>
        <Fit w={146.500} size={37} color="#fff" ml={4.500}>DIF:41.56</Fit>
        <Arrow dir="up" color="#fff" ml={11} w={18} />
        <Fit w={158} size={37} color={C.yellow} ml={21}>DEA:41.27</Fit>
        <Arrow dir="up" color={C.yellow} ml={11.500} w={18} />
        <Fit w={110} size={37} color={C.magenta} ml={19.500}>M:0.58</Fit>
        <Arrow dir="up" color={C.magenta} ml={12} w={18} />
      </Legend>

      <Frame $h={138} $open>
        <Over $x={16.500} $y={34}>
          <Fit w={92} size={39} weight={350} color={C.axis}>161.14</Fit>
        </Over>
        <MacdPlot />
      </Frame>
    </Screen>
  );
}
